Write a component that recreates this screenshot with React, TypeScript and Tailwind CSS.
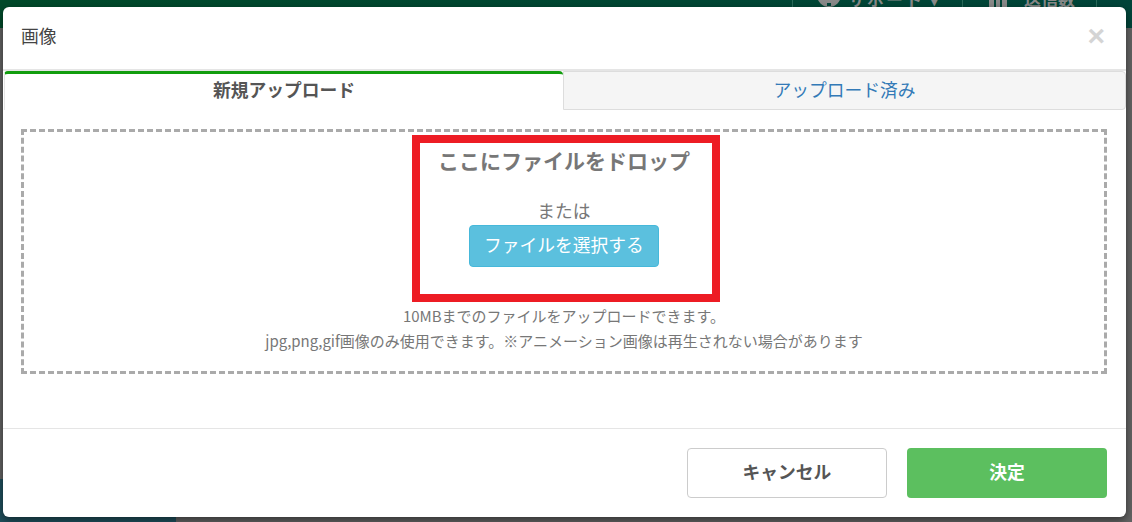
const CJK = "font-['Noto_Sans_CJK_JP','Liberation_Sans',sans-serif]"

export default function App() {
  return (
    <div className={`relative h-[522px] w-[1132px] overflow-hidden bg-[#636363] ${CJK}`}>
      {/* dimmed page behind the modal */}
      <div className="absolute inset-x-0 top-0 flex h-[28px] justify-end bg-gradient-to-r from-[#004a2a] to-[#00453a] text-[#8a8a8a]">
        <div className="flex h-[7px] overflow-hidden pr-[35px]">
          <div className="flex h-[7px] w-[171px] items-end gap-[7px] border-x border-[#2a6a5a] pl-[24px]">
            <span className="relative h-[24px] w-[24px] shrink-0 rounded-full bg-[#8a8a8a]">
              <span className="absolute bottom-[1px] left-[10px] h-[3px] w-[4px] bg-[#00463a]" />
            </span>
            <span className="text-[17px] leading-[17px] tracking-[2px] font-bold whitespace-nowrap">サポート ▾</span>
          </div>
          <div className="flex h-[7px] w-[134px] items-end border-r border-[#2a6a5a] pl-[26px]">
            <span className="flex h-[16px] w-[18px] shrink-0 gap-[2px]">
              <span className="flex-1 bg-[#8a8a8a]" />
              <span className="flex-1 bg-[#8a8a8a]" />
              <span className="flex-1 bg-[#8a8a8a]" />
            </span>
            <span className="ml-[17px] text-[17px] leading-[17px] font-bold whitespace-nowrap">送信数</span>
          </div>
        </div>
      </div>
      <div className="absolute bottom-0 left-0 h-[43px] w-[176px] bg-[#1f4f5c]" />

      <div className="relative ml-[3px] mt-[7px] flex h-[510px] w-[1123px] flex-col rounded-[6px] bg-white shadow-[0_3px_9px_rgba(0,0,0,0.5)]">
        <header className="flex h-[62px] shrink-0 items-center justify-between pb-[5px] pl-[18px] pr-[21px]">
          <h1 className="text-[17.75px] font-normal text-[#444]">画像</h1>
          <span className="font-['Liberation_Sans',sans-serif] text-[30px] leading-none font-bold text-[#d4d4d4]">×</span>
        </header>

        <div className="flex h-[40px] shrink-0 border-t-2 border-[#e5e5e5] pl-[1px]">
          <div className="flex h-[39px] w-[559px] items-center justify-center rounded-t-[4px] border-t-[3px] border-l border-t-[#129d0e] border-l-[#e5e5e5] bg-white pb-[5px] text-[17.75px] font-bold text-[#555]">
            新規アップロード
          </div>
          <div className="flex h-[39px] flex-1 items-center justify-center rounded-r-[4px] border border-[#dddddd] bg-[#f5f5f5] pb-[2px] text-[17.75px] text-[#337ab7]">
            アップロード済み
          </div>
        </div>

        <section className="px-[18px] pt-[20px]">
          <div className="flex h-[245px] w-[1086px] flex-col items-center border-[3px] border-dashed border-[#aaaaaa] pt-[13px]">
            <p className="text-[21px] leading-[30px] font-bold text-[#777]">ここにファイルをドロップ</p>
            <p className="mt-[23px] text-[17.75px] leading-[24px] text-[#777]">または</p>
            <button className="mt-[3px] h-[42px] w-[190px] rounded-[4px] border border-[#46b8da] bg-[#5bc0de] pb-[4px] text-[17.75px] text-white">
              ファイルを選択する
            </button>
            <p className="mt-[39px] text-[15px] leading-[20px] text-[#777]">10MBまでのファイルをアップロードできます。</p>
            <p className="mt-[5px] text-[15px] leading-[20px] text-[#777]">
              jpg,png,gif画像のみ使用できます。※アニメーション画像は再生されない場合があります
            </p>
          </div>
        </section>

        <footer className="mt-[54px] flex flex-1 justify-end gap-[20px] border-t-1 border-[#e5e5e5] pt-[19px] pr-[19px]">
          <button className="h-[50px] w-[200px] rounded-[4px] border border-[#cccccc] bg-white pb-[4px] text-[17.75px] font-bold text-[#555]">
            キャンセル
          </button>
          <button className="h-[50px] w-[200px] rounded-[4px] bg-[#5cbf5f] pb-[4px] text-[17.75px] font-bold text-white">
            決定
          </button>
        </footer>

        {/* red annotation drawn over the screenshot */}
        <div className="absolute left-[409px] top-[128px] h-[167px] w-[308px] border-[8px] border-[#ed1c24]" />
      </div>
    </div>
  )
}
